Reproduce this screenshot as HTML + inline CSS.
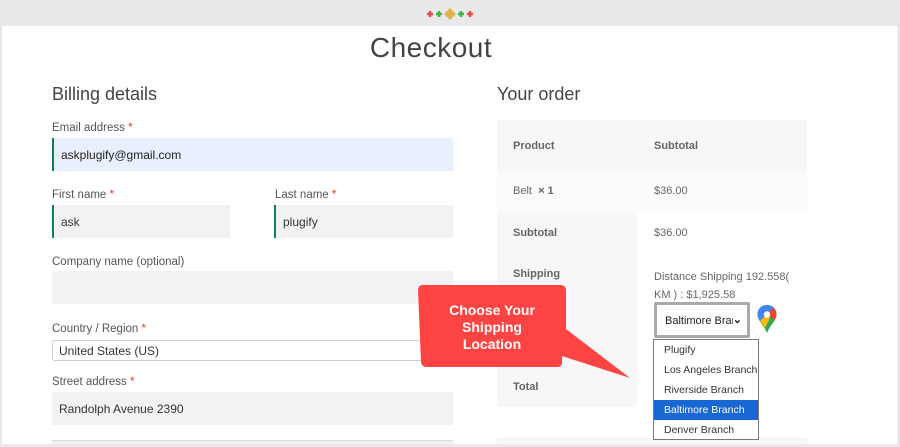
<!DOCTYPE html>
<html><head><style>
*{margin:0;padding:0;box-sizing:border-box}
body{width:900px;height:447px;overflow:hidden;background:#fff;font-family:"Liberation Sans",sans-serif;color:#555;position:relative}
.a{position:absolute}
.lbl{font-size:11.5px;color:#555}
.lbl b{color:#e2401c;font-weight:normal}
.in{background:#f2f2f2;font-size:12px;color:#333;padding-left:7px;display:flex;align-items:center}
.tb{font-size:11px;font-weight:bold;color:#666}
.tt{font-size:11px;color:#666}
.opt{height:20px;line-height:20px;padding-left:10px;font-size:10.5px;color:#333;white-space:nowrap;overflow:hidden}
</style></head><body>
<div class="a" style="left:0;top:0;width:900px;height:26px;background:#e9e9eb"></div>
<div class="a" style="left:0;top:26px;width:2px;height:421px;background:#e9e9eb"></div>
<div class="a" style="left:897px;top:26px;width:3px;height:421px;background:#e9e9eb"></div>
<div class="a" style="left:0;top:444px;width:900px;height:3px;background:#e9e9eb"></div>
<svg class="a" style="left:424px;top:7px" width="52" height="14">
<path d="M6 4v6M3 7h6" stroke="#e94b4b" stroke-width="2.5"/>
<path d="M15 4v6M12 7h6" stroke="#3bb54a" stroke-width="2.5"/>
<path d="M26 1l6 6-6 6-6-6z" fill="#e2b14a"/>
<path d="M37 4v6M34 7h6" stroke="#3bb54a" stroke-width="2.5"/>
<path d="M46 4v6M43 7h6" stroke="#e94b4b" stroke-width="2.5"/>
</svg>
<div class="a" style="left:0;width:862px;top:32px;text-align:center;font-size:28px;color:#444;font-weight:300;letter-spacing:0.5px">Checkout</div>
<div class="a" style="left:52px;top:84px;font-size:18px;color:#444">Billing details</div>
<div class="a" style="left:497px;top:84px;font-size:18px;color:#444">Your order</div>

<div class="a lbl" style="left:52px;top:122px">Email address <b>*</b></div>
<div class="a in" style="left:52px;top:138px;width:401px;height:33px;background:#e8f0fe;border-left:2px solid #0f834d;color:#222">askplugify@gmail.com</div>
<div class="a lbl" style="left:52px;top:189px">First name <b>*</b></div>
<div class="a in" style="left:52px;top:205px;width:178px;height:33px;border-left:2px solid #0f834d">ask</div>
<div class="a lbl" style="left:275px;top:189px">Last name <b>*</b></div>
<div class="a in" style="left:274px;top:205px;width:179px;height:33px;border-left:2px solid #0f834d">plugify</div>
<div class="a lbl" style="left:52px;top:256px">Company name (optional)</div>
<div class="a in" style="left:52px;top:271px;width:401px;height:33px"></div>
<div class="a lbl" style="left:52px;top:323px">Country / Region <b>*</b></div>
<div class="a in" style="left:52px;top:340px;width:401px;height:21px;background:#fff;border:1px solid #ccc;border-radius:3px;padding-left:6px">United States (US)</div>
<div class="a lbl" style="left:52px;top:376px">Street address <b>*</b></div>
<div class="a in" style="left:52px;top:392px;width:401px;height:33px">Randolph Avenue 2390</div>
<div class="a" style="left:52px;top:440px;width:401px;height:4px;background:#f2f2f2;border-top:1px solid #ddd"></div>

<div class="a" style="left:497px;top:120px;width:310px;height:52px;background:#f7f7f7"></div>
<div class="a" style="left:497px;top:172px;width:310px;height:40px;background:#fbfbfb"></div>
<div class="a" style="left:497px;top:212px;width:140px;height:195px;background:#f7f7f7"></div>
<div class="a" style="left:497px;top:437px;width:310px;height:7px;background:#f7f7f7"></div>
<div class="a tb" style="left:513px;top:140px">Product</div>
<div class="a tb" style="left:654px;top:140px">Subtotal</div>
<div class="a tt" style="left:513px;top:185px">Belt &nbsp;<b>× 1</b></div>
<div class="a tt" style="left:654px;top:185px">$36.00</div>
<div class="a tb" style="left:513px;top:227px">Subtotal</div>
<div class="a tt" style="left:654px;top:227px">$36.00</div>
<div class="a tb" style="left:513px;top:268px">Shipping</div>
<div class="a tt" style="left:654px;top:268px;line-height:18px;width:150px">Distance Shipping 192.558(<br>KM ) : $1,925.58</div>
<div class="a tb" style="left:513px;top:381px">Total</div>

<div class="a" style="left:654px;top:302px;width:96px;height:36px;border:3px solid #aaa;border-radius:2px;background:#fff;font-size:11px;color:#222;padding:10px 0 0 8px;white-space:nowrap;overflow:hidden"><span style="display:inline-block;width:68px;overflow:hidden;vertical-align:top">Baltimore Branch</span><span style="position:absolute;right:5px;top:8px;font-size:11px;font-weight:bold">&#8964;</span></div>
<svg class="a" style="left:756px;top:304px" width="22" height="30" viewBox="0 0 22 30">
<path d="M11 1C5.5 1 1.5 5 1.5 10.5c0 6 6 10 9.5 18.5C14.5 20.5 20.5 16.5 20.5 10.5 20.5 5 16.5 1 11 1z" fill="#34a853"/>
<path d="M11 1C5.5 1 1.5 5 1.5 10.5c0 2.5 1 4.5 2.5 6.5L17.5 3.5C15.8 1.9 13.5 1 11 1z" fill="#4285f4"/>
<path d="M4 17L11 10 17.5 3.5C19.5 5.3 20.5 7.8 20.5 10.5c0 2-.8 3.8-2 5.5L11 10z" fill="#ea4335"/>
<path d="M4 17c1.5 2 3.5 4 5 7L14 14 11 10z" fill="#fbbc04"/>
<circle cx="11" cy="10.5" r="3.2" fill="#fff"/>
</svg>
<div class="a" style="left:653px;top:339px;width:106px;height:101px;border:1px solid #777;background:#fff">
<div class="opt">Plugify</div><div class="opt">Los Angeles Branch</div><div class="opt">Riverside Branch</div>
<div class="opt" style="background:#1967d2;color:#fff">Baltimore Branch</div><div class="opt">Denver Branch</div></div>

<svg class="a" style="left:416px;top:284px" width="220" height="100">
<path d="M8 1H145a5 5 0 0 1 5 5V45L214 94 146 72V79a4 4 0 0 1-4 4H10a5 5 0 0 1-5-5L2 6a5 5 0 0 1 6-5z" fill="#fd4443"/>
<text x="76" y="31" text-anchor="middle" fill="#fff" font-family="Liberation Sans" font-weight="bold" font-size="14">Choose Your</text>
<text x="76" y="48" text-anchor="middle" fill="#fff" font-family="Liberation Sans" font-weight="bold" font-size="14">Shipping</text>
<text x="76" y="65" text-anchor="middle" fill="#fff" font-family="Liberation Sans" font-weight="bold" font-size="14">Location</text>
</svg>
</body></html>
